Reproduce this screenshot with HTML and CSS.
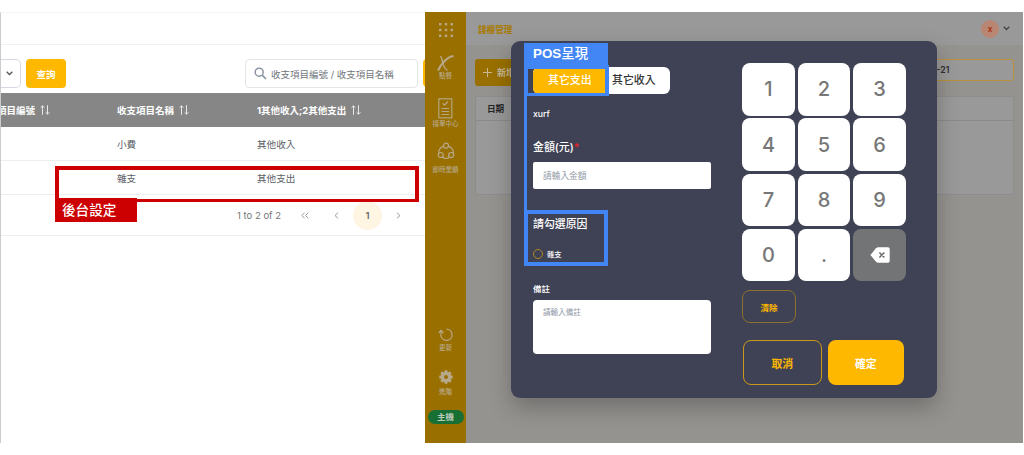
FILE: index.html
```html
<!DOCTYPE html>
<html lang="zh-Hant">
<head>
    <meta charset="UTF-8">
    <meta name="viewport" content="width=device-width, initial-scale=1.0">
    <title>錢櫃管理</title>
    <link rel="stylesheet" href="styles.css">
</head>
<body>
    <main class="stage">
        <section class="backend">
            <div class="backend-top"></div>
            <div class="toolbar">
                <div class="select">
                    <svg width="7" height="5" viewBox="0 0 7 5"><path d="M0.7 0.8 3.5 3.5 6.3 0.8" fill="none" stroke="#555" stroke-width="1.3"/></svg>
                </div>
                <button class="query">查詢</button>
                <div class="search">
                    <svg width="13" height="13" viewBox="0 0 13 13"><circle cx="5.2" cy="5.2" r="4" fill="none" stroke="#8b95a3" stroke-width="1.5"/><path d="M8.2 8.2 12 12" stroke="#8b95a3" stroke-width="1.7"/></svg>
                    <span>收支項目編號 / 收支項目名稱</span>
                </div>
                <div class="next-button"></div>
            </div>
            <div class="row row-head">
                <div class="clip"><span>項目編號</span><svg class="sort" viewBox="0 0 10 10"><path d="M2.5 9.8V.8M.6 2.7 2.5.8l1.9 1.9M7.5.2v9M5.6 7.3l1.9 1.9 1.9-1.9"/></svg></div>
                <div>收支項目名稱<svg class="sort" viewBox="0 0 10 10"><path d="M2.5 9.8V.8M.6 2.7 2.5.8l1.9 1.9M7.5.2v9M5.6 7.3l1.9 1.9 1.9-1.9"/></svg></div>
                <div>1其他收入;2其他支出<svg class="sort" viewBox="0 0 10 10"><path d="M2.5 9.8V.8M.6 2.7 2.5.8l1.9 1.9M7.5.2v9M5.6 7.3l1.9 1.9 1.9-1.9"/></svg></div>
            </div>
            <div class="row"><div></div><div>小費</div><div>其他收入</div></div>
            <div class="row"><div></div><div>雜支</div><div>其他支出</div></div>
            <div class="pager">
                <span class="pager-text">1 to 2 of 2</span>
                <svg width="8" height="7" viewBox="0 0 8 7"><path d="M3.5.7.9 3.5l2.6 2.8M7.2.7 4.6 3.5l2.6 2.8"/></svg>
                <svg class="prev" width="5" height="7" viewBox="0 0 5 7"><path d="M4 .7 1 3.5l3 2.8"/></svg>
                <span class="page">1</span>
                <svg width="5" height="7" viewBox="0 0 5 7"><path d="M1 .7l3 2.8-3 2.8"/></svg>
            </div>
            <div class="mark-red"></div>
            <div class="tag-red">後台設定</div>
        </section>

        <section class="pos">
            <nav class="sidebar">
                <svg class="dots" width="16" height="16" viewBox="0 0 16 16" fill="#b8a88a"><rect x="1" y="1" width="2.4" height="2.4"/><rect x="6.8" y="1" width="2.4" height="2.4"/><rect x="12.6" y="1" width="2.4" height="2.4"/><rect x="1" y="6.8" width="2.4" height="2.4"/><rect x="6.8" y="6.8" width="2.4" height="2.4"/><rect x="12.6" y="6.8" width="2.4" height="2.4"/><rect x="1" y="12.6" width="2.4" height="2.4"/><rect x="6.8" y="12.6" width="2.4" height="2.4"/><rect x="12.6" y="12.6" width="2.4" height="2.4"/></svg>
                <div class="item item-order">
                    <svg width="17" height="17" viewBox="0 0 17 17" fill="none" stroke="#b8a88a"><path d="M3.5 1c1.500 1.500 1.400 3.500 2 6s1.500 6.500 5 8.300" stroke-width="1.300"/><path d="M16.500 1C10.500 1.500 4.500 8.500 1 15.500" stroke-width="2"/></svg>
                    <span>點餐</span>
                </div>
                <div class="item item-center">
                    <svg width="15" height="21" viewBox="0 0 15 21" fill="none" stroke="#b8a88a"><rect x=".8" y=".8" width="13" height="19" stroke-width="1.1"/><path d="M4.8 5.4 6.5 7.2 9.8 3.5M3.5 10.500h7.6M3.5 13.500h7.6M3.5 16.500h7.6" stroke-width="1.2"/></svg>
                    <span>接單中心</span>
                </div>
                <div class="item item-live">
                    <svg width="18" height="18" viewBox="0 0 18 18" fill="none" stroke="#b8a88a" stroke-width="1.2"><circle cx="9" cy="3.700" r="2.500"/><circle cx="3.800" cy="13" r="2.500"/><circle cx="14.200" cy="13" r="2.500"/><path d="M6.500 4C3.500 5.500 1.200 8 1.700 11.500M11.500 4c3 1.500 5.300 4 4.800 7.500M5.500 15c2 1.900 5 1.900 7 0"/></svg>
                    <span>即時業績</span>
                </div>
                <div class="item item-refresh">
                    <svg width="15" height="14" viewBox="0 0 15 14" fill="none" stroke="#b8a88a" stroke-width="1.2"><path d="M8.500 1.200a5.600 5.600 0 1 1-5.500 7V2.500M.6 5 3 2.300 5.500 5"/></svg>
                    <span>更新</span>
                </div>
                <div class="item item-setup">
                    <svg width="14" height="14" viewBox="0 0 14 14" fill="none" stroke="#b8a88a"><circle cx="7" cy="7" r="3.700" stroke-width="3.400"/><path d="M7 .3v2M7 11.700v2M.3 7h2M11.700 7h2M2.300 2.300l1.400 1.400M10.300 10.300l1.400 1.400M11.700 2.300l-1.400 1.400M3.700 10.300l-1.400 1.400" stroke-width="2.800"/></svg>
                    <span>進階</span>
                </div>
                <span class="host">主機</span>
            </nav>
            <div class="pos-main">
                <header class="pos-top">
                    <span class="pos-title">錢櫃管理</span>
                    <span class="avatar">x</span>
                    <svg width="7" height="5" viewBox="0 0 7 5"><path d="M.7.8 3.5 3.5 6.3.8" fill="none" stroke="#444" stroke-width="1.3"/></svg>
                </header>
                <div class="pos-tools">
                    <button class="add"><svg width="9" height="9" viewBox="0 0 9 9"><path d="M4.5 0v9M0 4.5h9" stroke="#c8b896"/></svg>新增</button>
                    <div class="date">2024-03-21</div>
                </div>
                <div class="pos-table">
                    <div class="pos-table-head">日期</div>
                </div>
            </div>
        </section>

        <div class="modal">
            <div class="form">
                <div class="tabs">
                    <span class="tab tab-active">其它支出</span>
                    <span class="tab">其它收入</span>
                </div>
                <div class="user">xurf</div>
                <div class="label">金額(元)<i>*</i></div>
                <div class="input">請輸入金額</div>
                <div class="label label-reason">請勾選原因</div>
                <div class="radio"><span class="circle"></span>雜支</div>
                <div class="label-note">備註</div>
                <div class="textarea">請輸入備註</div>
            </div>
            <div class="pad">
                <div class="keys">
                    <button>1</button><button>2</button><button>3</button>
                    <button>4</button><button>5</button><button>6</button>
                    <button>7</button><button>8</button><button>9</button>
                    <button>0</button><button>.</button>
                    <button class="back"><svg width="20" height="16" viewBox="0 0 20 16"><path d="M.4 8 6 1.3Q7 .3 8.3.3H18Q19.7.3 19.7 2v12q0 1.7-1.7 1.7H8.3Q7 15.7 6 14.7Z" fill="#fff"/><path d="M9.4 5.500l5 5M14.4 5.500l-5 5" stroke="#666" stroke-width="1.4"/></svg></button>
                </div>
                <button class="clear">清除</button>
                <div class="actions">
                    <button class="cancel">取消</button>
                    <button class="ok">確定</button>
                </div>
            </div>
        </div>

        <div class="line-blue"></div>
        <div class="mark-blue mark-tab"></div>
        <div class="mark-blue mark-reason"></div>
        <div class="tag-blue"><b>POS</b>呈現</div>
    </main>
</body>
</html>
```
FILE: styles.css
```css
* {
    box-sizing: border-box;
}
body {
    margin: 0;
    background-color: #fff;
    font-family: Inter, "Noto Sans CJK TC", sans-serif;
    font-size: 10px;
    color: #596066;
}
button {
    padding: 0;
    border: none;
    font-family: inherit;
}
svg {
    flex: none;
}
.stage {
    position: relative;
    display: flex;
    width: 1024px;
    height: 455px;
    padding: 12px 1px 12px 0;
    overflow: hidden;
}

/* back office */
.backend {
    position: relative;
    width: 425px;
    height: 431px;
    border-left: 1px solid #ccc;
    border-top: 1px solid #f4f4f4;
    overflow: hidden;
}
.backend-top {
    height: 32px;
    border-bottom: 1px solid #f0f0f0;
}
.toolbar {
    display: flex;
    height: 48px;
    padding-top: 14px;
}
.toolbar > * {
    flex: none;
}
.select {
    display: flex;
    align-items: center;
    justify-content: flex-end;
    width: 21px;
    height: 29px;
    margin-left: -1px;
    padding-right: 7px;
    border: 1px solid #d5dae2;
    border-left: none;
    border-radius: 0 5px 5px 0;
}
.query {
    width: 40px;
    height: 29px;
    margin-left: 5px;
    border-radius: 4px;
    background-color: #ffb800;
    color: #fff;
    font-size: 9.5px;
    font-weight: 700;
}
.search {
    display: flex;
    align-items: center;
    gap: 4px;
    width: 173px;
    height: 29px;
    margin-left: 179px;
    padding-left: 8px;
    border: 1px solid #e3e5e8;
    border-radius: 4px;
    font-size: 9.5px;
    color: #70757a;
    white-space: nowrap;
}
.next-button {
    width: 20px;
    height: 28px;
    margin-left: 5px;
    border-radius: 4px;
    background-color: #ffb800;
}
.row {
    display: grid;
    grid-template-columns: 116px 140px 168px;
    align-items: center;
    height: 34px;
    border-bottom: 1px solid #eee;
    font-size: 9.6px;
}
.row-head {
    background-color: #868686;
    border: none;
    color: #fff;
    font-weight: 700;
    font-size: 9.5px;
}
.row-head > div {
    display: flex;
    align-items: center;
    gap: 5px;
}
.clip {
    margin-left: -4px;
}
.sort {
    width: 10px;
    height: 10px;
    fill: none;
    stroke: #e8e8e8;
    stroke-width: 1;
}
.pager {
    display: flex;
    align-items: center;
    height: 41px;
    padding-left: 236px;
    border-bottom: 1px solid #eee;
    color: #777;
    font-size: 9.5px;
}
.pager svg {
    fill: none;
    stroke: #999;
}
.pager-text {
    width: 64px;
}
.pager .prev {
    margin-left: 25px;
}
.page {
    width: 29px;
    height: 29px;
    margin: 0 14px;
    border-radius: 50%;
    background-color: #fff5e3;
    color: #666;
    font-weight: 600;
    line-height: 29px;
    text-align: center;
}
.mark-red {
    position: absolute;
    left: 54px;
    top: 153px;
    width: 364px;
    height: 36px;
    border: 4px solid #c00;
    border-bottom-width: 3px;
}
.tag-red {
    position: absolute;
    left: 54px;
    top: 185px;
    width: 82px;
    height: 24px;
    padding-left: 7px;
    background-color: #c00;
    color: #fff;
    font-size: 13.6px;
    font-weight: 500;
    line-height: 25px;
}

/* POS screen behind the dialog */
.pos {
    display: flex;
    flex: 1;
    height: 431px;
    background-color: #959390;
}
.sidebar {
    display: flex;
    flex-direction: column;
    align-items: center;
    width: 41px;
    background-color: #997000;
    color: #b8a88a;
}
.dots {
    margin-top: 10px;
}
.item {
    display: flex;
    flex-direction: column;
    align-items: center;
    font-size: 6.5px;
    font-weight: 500;
    line-height: 9px;
}
.item-order {
    margin-top: 17px;
}
.item-center {
    margin-top: 17px;
}
.item-center span {
    margin-top: 1px;
}
.item-live {
    margin-top: 13px;
}
.item-live span {
    margin-top: 6px;
}
.item-refresh {
    margin-top: 153px;
}
.item-refresh span {
    margin-top: 2px;
}
.item-setup {
    margin-top: 17px;
}
.item-setup span {
    margin-top: 4px;
}
.host {
    width: 36px;
    height: 14px;
    margin-top: 13px;
    border-radius: 7px;
    background-color: #176f33;
    color: #bcc9bc;
    font-size: 8.5px;
    font-weight: 700;
    line-height: 14px;
    text-align: center;
}
.pos-main {
    flex: 1;
}
.pos-top {
    display: flex;
    align-items: center;
    height: 33px;
    padding: 0 13px 0 12px;
    background-color: #999;
}
.pos-title {
    flex: 1;
    color: #a87900;
    font-size: 8.6px;
    font-weight: 700;
}
.avatar {
    width: 18px;
    height: 18px;
    margin-right: 4px;
    border-radius: 50%;
    background-color: #b88672;
    color: #aa3413;
    font-size: 8px;
    font-weight: 700;
    line-height: 18px;
    text-align: center;
}
.pos-tools {
    display: flex;
    justify-content: space-between;
    padding: 14px 9px 0;
}
.add {
    display: flex;
    align-items: center;
    gap: 5px;
    width: 60px;
    height: 27px;
    padding-left: 8px;
    border-radius: 3px;
    background-color: #997000;
    color: #c8b896;
    font-size: 9px;
    font-weight: 700;
}
.date {
    width: 130px;
    height: 22px;
    padding-left: 14px;
    border: 1px solid #b8923a;
    border-radius: 3px;
    background-color: #999;
    color: #303030;
    font-size: 8.7px;
    font-weight: 600;
    line-height: 20px;
}
.pos-table {
    height: 99px;
    margin: 10px 9px 0;
    border: 1px solid #8d8d8d;
    background-color: #999;
}
.pos-table-head {
    height: 24px;
    padding-left: 11px;
    border-bottom: 1px solid #8a8a8a;
    color: #252525;
    font-size: 8.6px;
    font-weight: 700;
    line-height: 24px;
}

/* dialog */
.modal {
    position: absolute;
    left: 511px;
    top: 41px;
    display: flex;
    gap: 31px;
    width: 426px;
    height: 357px;
    padding: 22px 31px 0 22px;
    border-radius: 9px;
    background-color: #3f4254;
    box-shadow: 0 9px 22px rgba(0, 0, 0, 0.25);
    color: #fff;
}
.form {
    width: 178px;
    padding-top: 4px;
}
.tabs {
    display: flex;
    width: 137px;
    height: 27px;
    border-radius: 6px;
    background-color: #fff;
    overflow: hidden;
}
.tab {
    flex: 1;
    padding-left: 4px;
    color: #333;
    font-size: 10.9px;
    font-weight: 500;
    line-height: 27px;
}
.tab-active {
    flex: 0 0 75px;
    padding-left: 15px;
    background-color: #ffb800;
    color: #fff;
}
.user {
    height: 12px;
    margin-top: 14px;
    font-size: 8.7px;
    font-weight: 500;
    line-height: 12px;
}
.label {
    height: 16px;
    margin-top: 19px;
    font-size: 10.9px;
    font-weight: 500;
    line-height: 16px;
}
.label i {
    color: #e22;
    font-style: normal;
}
.input {
    height: 27px;
    margin-top: 7px;
    padding-left: 10px;
    border-radius: 2px;
    background-color: #fff;
    color: #9199a6;
    font-size: 8.7px;
    line-height: 28px;
}
.label-reason {
    margin-top: 27px;
}
.radio {
    display: flex;
    align-items: center;
    gap: 4px;
    height: 12px;
    margin-top: 16px;
    font-size: 7.3px;
    font-weight: 500;
}
.circle {
    width: 10px;
    height: 10px;
    border: 1px solid #b08a24;
    border-radius: 50%;
}
.label-note {
    height: 12px;
    margin-top: 23px;
    font-size: 8.5px;
    font-weight: 500;
    line-height: 12px;
}
.textarea {
    height: 54px;
    margin-top: 5px;
    padding: 7px 10px;
    border-radius: 4px;
    background-color: #fff;
    color: #9199a6;
    font-size: 7.6px;
    line-height: 12px;
}
.pad {
    width: 164px;
}
.keys {
    display: grid;
    grid-template-columns: repeat(3, 1fr);
    grid-auto-rows: 52.6px;
    gap: 2.7px;
}
.keys button {
    border-radius: 8px;
    background-color: #fff;
    color: #777;
    font-size: 20px;
    font-weight: 500;
}
.keys .back {
    display: flex;
    align-items: center;
    justify-content: center;
    background-color: #737476;
}
.clear {
    display: block;
    width: 54px;
    height: 33px;
    margin-top: 9px;
    border: 1px solid #8c712c;
    border-radius: 8px;
    background: none;
    color: #ffb800;
    font-size: 8.5px;
    font-weight: 700;
}
.actions {
    display: flex;
    gap: 6px;
    margin: 17px 2px 0 1px;
}
.actions button {
    flex: 1;
    height: 45px;
    border-radius: 8px;
    font-size: 10.8px;
    font-weight: 700;
}
.actions .cancel {
    border: 1.5px solid #c9981a;
    background: none;
    color: #ffb800;
}
.actions .ok {
    background-color: #ffb800;
    color: #fff;
}

/* callouts */
.mark-blue {
    position: absolute;
    left: 524px;
    border: 4px solid #4285f4;
}
.mark-tab {
    top: 65px;
    width: 85px;
    height: 31px;
    border-bottom-width: 3px;
}
.mark-reason {
    top: 210px;
    width: 84px;
    height: 56px;
}
.line-blue {
    position: absolute;
    left: 524px;
    top: 92px;
    width: 3px;
    height: 120px;
    background-color: #4285f4;
}
.tag-blue {
    position: absolute;
    left: 524px;
    top: 43px;
    width: 84px;
    height: 25px;
    padding-left: 9px;
    background-color: #4285f4;
    color: #fff;
    font-family: "Liberation Sans", "Noto Sans CJK TC", sans-serif;
    font-size: 13.4px;
    font-weight: 500;
    line-height: 22px;
}
```
